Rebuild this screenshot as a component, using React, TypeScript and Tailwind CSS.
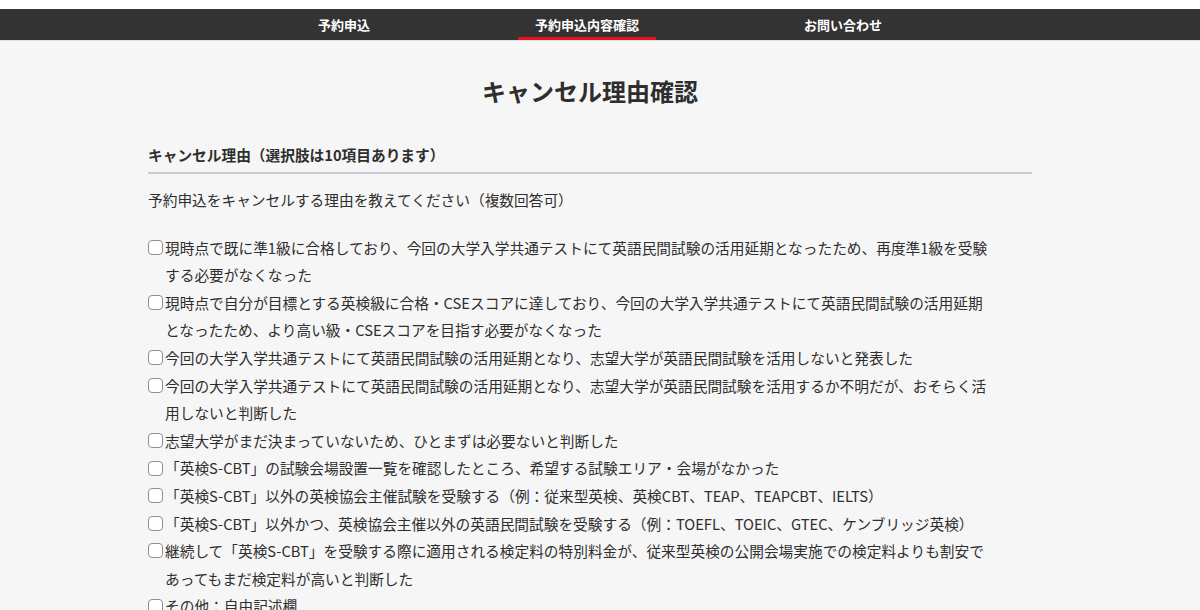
import * as React from "react";

const tabs = [
  { label: "予約申込", active: false },
  { label: "予約申込内容確認", active: true },
  { label: "お問い合わせ", active: false },
];

// Lines are kept as in the original page so the wrap points match.
const reasons: string[][] = [
  [
    "現時点で既に準1級に合格しており、今回の大学入学共通テストにて英語民間試験の活用延期となったため、再度準1級を受験",
    "する必要がなくなった",
  ],
  [
    "現時点で自分が目標とする英検級に合格・CSEスコアに達しており、今回の大学入学共通テストにて英語民間試験の活用延期",
    "となったため、より高い級・CSEスコアを目指す必要がなくなった",
  ],
  ["今回の大学入学共通テストにて英語民間試験の活用延期となり、志望大学が英語民間試験を活用しないと発表した"],
  [
    "今回の大学入学共通テストにて英語民間試験の活用延期となり、志望大学が英語民間試験を活用するか不明だが、おそらく活",
    "用しないと判断した",
  ],
  ["志望大学がまだ決まっていないため、ひとまずは必要ないと判断した"],
  ["「英検S-CBT」の試験会場設置一覧を確認したところ、希望する試験エリア・会場がなかった"],
  ["「英検S-CBT」以外の英検協会主催試験を受験する（例：従来型英検、英検CBT、TEAP、TEAPCBT、IELTS）"],
  ["「英検S-CBT」以外かつ、英検協会主催以外の英語民間試験を受験する（例：TOEFL、TOEIC、GTEC、ケンブリッジ英検）"],
  [
    "継続して「英検S-CBT」を受験する際に適用される検定料の特別料金が、従来型英検の公開会場実施での検定料よりも割安で",
    "あってもまだ検定料が高いと判断した",
  ],
  ["その他：自由記述欄"],
];

function ReasonItem({ lines }: { lines: string[] }) {
  const [checked, setChecked] = React.useState(false);
  return (
    <label className="flex cursor-pointer items-start">
      <span className="flex h-[27.6px] w-[15px] shrink-0 items-center">
        <input
          type="checkbox"
          className="sr-only"
          checked={checked}
          onChange={(e) => setChecked(e.target.checked)}
        />
        <span
          aria-hidden
          className={
            checked
              ? "block h-[15px] w-[15px] shrink-0 rounded-[4px] border border-[#0075ff] bg-[#0075ff]"
              : "block h-[15px] w-[15px] shrink-0 rounded-[4px] border border-[#8f8f8f] bg-white"
          }
        />
      </span>
      <span className="ml-[2px] flex flex-col">
        {lines.map((line) => (
          <span key={line} className="whitespace-nowrap">
            {line}
          </span>
        ))}
      </span>
    </label>
  );
}

export default function App() {
  return (
    <div
      className="min-h-[610px] bg-[#f6f6f6] text-[#2e2e2e]"
      style={{ fontFamily: '"Noto Sans CJK JP", "Noto Sans", sans-serif' }}
    >
      <div className="h-[9px] bg-white" />
      <nav className="h-[32px] border-b border-[#e2e2e2] bg-[#333]">
        <ul className="mx-auto flex h-full w-[1185px] justify-center gap-[131px]">
          {tabs.map((tab) => (
            <li
              key={tab.label}
              className={
                tab.active
                  ? "flex h-full items-center border-b-[3px] border-[#e5141b] px-[17px] pt-[3px] text-[13px] font-bold text-white"
                  : "flex h-full items-center border-b-[3px] border-transparent px-[17px] pt-[3px] text-[13px] font-bold text-white"
              }
            >
              {tab.label}
            </li>
          ))}
        </ul>
      </nav>

      <main className="w-[1180px] pt-[32px]">
        <div className="mx-auto w-[884px]">
          <h1 className="text-center text-[24px] font-bold leading-[36px]">キャンセル理由確認</h1>

          <section className="mt-[34px]">
            <h2 className="border-b-2 border-[#c9cdd4] pb-[5px] text-[14.7px] font-bold leading-[24px]">
              キャンセル理由（選択肢は10項目あります）
            </h2>
            <p className="mt-[12px] text-[14.7px] leading-[27.6px]">
              予約申込をキャンセルする理由を教えてください（複数回答可）
            </p>
            <div className="mt-[20px] flex flex-col text-[14.7px] leading-[27.6px]">
              {reasons.map((lines, i) => (
                <ReasonItem key={i} lines={lines} />
              ))}
            </div>
          </section>
        </div>
      </main>
    </div>
  );
}
